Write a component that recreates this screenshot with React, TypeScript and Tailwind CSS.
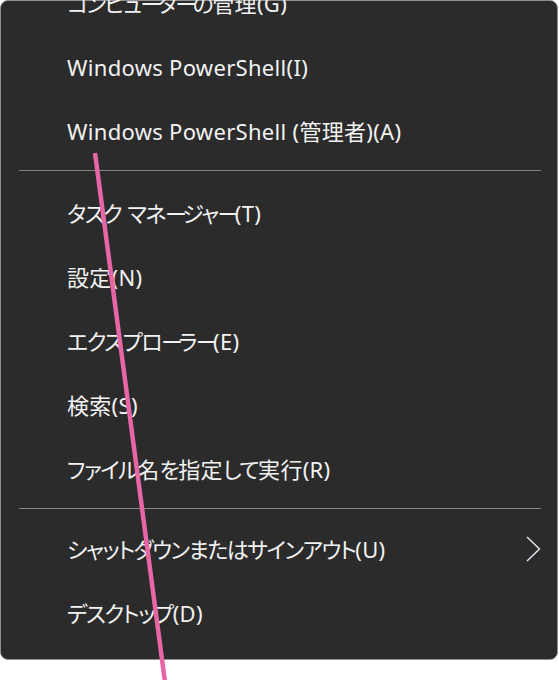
import React from 'react'

const font = '"Noto Sans", "Noto Sans CJK JP", sans-serif'

type Entry = { label: string; sep?: false; arrow?: boolean } | { sep: true; last?: boolean }

const entries: Entry[] = [
  { label: 'コンピューターの管理(G)' },
  { label: 'Windows PowerShell(I)' },
  { label: 'Windows PowerShell (管理者)(A)' },
  { sep: true },
  { label: 'タスク マネージャー(T)' },
  { label: '設定(N)' },
  { label: 'エクスプローラー(E)' },
  { label: '検索(S)' },
  { label: 'ファイル名を指定して実行(R)' },
  { sep: true, last: true },
  { label: 'シャットダウンまたはサインアウト(U)', arrow: true },
  { label: 'デスクトップ(D)' },
]

// Yu Gothic UI kana are narrower than Noto's, so tighten them
function Label({ text }: { text: string }) {
  const parts = text.match(/ー|[\u3040-\u30FB]+|[^\u3040-\u30FF]+/g) ?? []
  return (
    <span className="text-[22px] text-[#f2f2f2] [font-feature-settings:'palt']">
      {parts.map((p, i) =>
        p === 'ー' ? (
          <span key={i} className="tracking-[-4.5px]">{p}</span>
        ) : /[\u3040-\u30FB]/.test(p) ? (
          <span key={i} className="tracking-[-1.5px]">{p}</span>
        ) : (
          <span key={i} className="tracking-[0.3px]">{p}</span>
        )
      )}
    </span>
  )
}

export default function App() {
  return (
    <div className="relative w-[559px] h-[680px] bg-white overflow-hidden" style={{ fontFamily: font }}>
      {/* Menu */}
      <div className="w-[558px] h-[660px] rounded-lg border border-[#8e8e8e] bg-[#2b2b2b]">
        <div className="flex flex-col -mt-[30px]">
          {entries.map((e, i) =>
            e.sep ? (
              <div key={i} className={e.last ? 'pt-[7px] pb-[8px] pl-[18px] pr-[16px]' : 'pt-[7px] pb-[10px] pl-[18px] pr-[16px]'}>
                <div className="h-px bg-[#858585]" />
              </div>
            ) : (
              <div key={i} className="h-[64px] flex items-center justify-between pl-[66px] pr-[16px]">
                <Label text={e.label} />
                {e.arrow && (
                  <svg width="16" height="26" viewBox="0 0 16 26" fill="none">
                    <path d="M2 1 L14.5 13 L2 25" stroke="#e8ecf5" strokeWidth="1.4" />
                  </svg>
                )}
              </div>
            )
          )}
        </div>
      </div>

      {/* Pink annotation line */}
      <svg className="absolute inset-0 pointer-events-none" width="559" height="680">
        <line x1="95" y1="153" x2="165" y2="682" stroke="#e766a6" strokeWidth="4.5" />
      </svg>
    </div>
  )
}
